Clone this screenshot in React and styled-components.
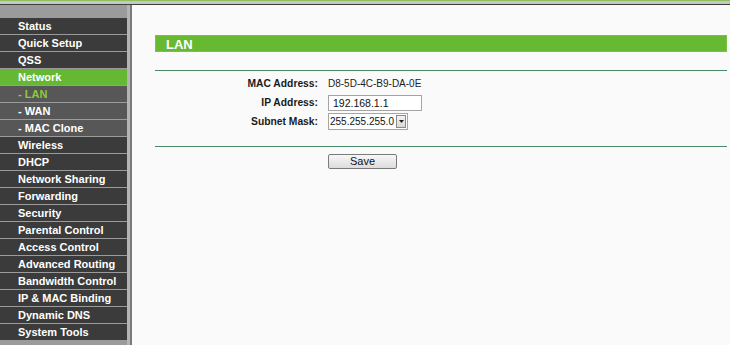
import styled, { createGlobalStyle } from "styled-components";

const GlobalStyle = createGlobalStyle`
  html, body {
    margin: 0;
    padding: 0;
    background: #fafafa;
  }
  body {
    font-family: "Liberation Sans", Arial, sans-serif;
    font-size: 11px;
  }
`;

const Page = styled.div`
  display: flex;
  flex-direction: column;
  width: 730px;
  height: 345px;
  overflow: hidden;
`;

const TopStrip = styled.div`
  height: 5px;
  flex-shrink: 0;
  background: linear-gradient(
    to bottom,
    #8cc15e 0px,
    #8cc15e 1px,
    #c6c6c6 1px,
    #c6c6c6 4px,
    #3e3e3e 4px,
    #3e3e3e 5px
  );
`;

const Body = styled.div`
  display: flex;
  flex: 1;
`;

const Sidebar = styled.nav`
  width: 127px;
  padding: 13px 3px 0 0;
  background: #9b9b9b;
  border-right: 2px solid #7a7a7a;
  display: flex;
  flex-direction: column;
  gap: 1px;
  box-shadow: inset -3px 0 0 #b4b4b4;
`;

const MenuItem = styled.div`
  height: 16px;
  line-height: 16px;
  padding-left: 18px;
  color: ${(p) => (p.$current ? "#8fc93a" : "#ffffff")};
  font-weight: bold;
  font-size: 11px;
  background: ${(p) =>
    p.$active ? "#66b734" : p.$sub ? "#575757" : "#3b3b3b"};
  white-space: nowrap;
`;

const Content = styled.main`
  flex: 1;
  background: #fafafa;
  padding: 30px 3px 0 23px;
`;

const Header = styled.div`
  height: 17px;
  line-height: 17px;
  background: #68b932;
  border: 1px solid #79c244;
  box-sizing: border-box;
  color: #ffffff;
  font-weight: bold;
  font-size: 13px;
  padding-left: 10px;
`;

const Rule = styled.div`
  height: 1px;
  background: #4a8a6a;
  margin-top: ${(p) => p.$top}px;
`;

const Form = styled.div`
  display: grid;
  grid-template-columns: 163px max-content;
  column-gap: 10px;
  row-gap: 2px;
  align-items: center;
  justify-items: start;
  padding-top: 4px;
  justify-content: start;
`;

const Label = styled.div`
  justify-self: end;
  text-align: right;
  font-weight: bold;
  font-size: 10.3px;
  color: #1a1a1a;
  height: 17px;
  line-height: 17px;
`;

const Value = styled.div`
  color: #222;
  font-size: 10px;
  height: 17px;
  line-height: 17px;
`;

const TextInput = styled.div`
  width: 88px;
  height: 14px;
  line-height: 14px;
  border: 1px solid #a5a5a5;
  background: #ffffff;
  color: #111;
  font-size: 10.5px;
  padding-left: 4px;
`;

const Select = styled.div`
  display: flex;
  align-items: center;
  width: 78px;
  height: 15px;
  border: 1px solid #a5a5a5;
  background: #ffffff;
  font-size: 10px;
  color: #111;
`;

const SelectText = styled.span`
  flex: 1;
  padding-left: 1px;
  line-height: 15px;
  white-space: nowrap;
`;

const SelectButton = styled.span`
  width: 8px;
  height: 11px;
  margin-right: 1px;
  flex-shrink: 0;
  border: 1px solid #8a8a8a;
  background: linear-gradient(#f4f4f4, #d8d8d8);
  display: flex;
  align-items: center;
  justify-content: center;
`;

const Actions = styled.div`
  padding: 7px 0 0 173px;
`;

const Button = styled.div`
  width: 67px;
  height: 13px;
  line-height: 13px;
  text-align: center;
  border: 1px solid #7a7a7a;
  border-radius: 2px;
  background: linear-gradient(#f7f7f7, #dcdcdc);
  color: #111;
  font-size: 11px;
`;

const menu = [
  { label: "Status" },
  { label: "Quick Setup" },
  { label: "QSS" },
  { label: "Network", active: true },
  { label: "- LAN", sub: true, current: true },
  { label: "- WAN", sub: true },
  { label: "- MAC Clone", sub: true },
  { label: "Wireless" },
  { label: "DHCP" },
  { label: "Network Sharing" },
  { label: "Forwarding" },
  { label: "Security" },
  { label: "Parental Control" },
  { label: "Access Control" },
  { label: "Advanced Routing" },
  { label: "Bandwidth Control" },
  { label: "IP & MAC Binding" },
  { label: "Dynamic DNS" },
  { label: "System Tools" },
];

export default function App() {
  return (
    <Page>
      <GlobalStyle />
      <TopStrip />
      <Body>
        <Sidebar>
          {menu.map((m) => (
            <MenuItem
              key={m.label}
              $active={m.active}
              $sub={m.sub}
              $current={m.current}
            >
              {m.label}
            </MenuItem>
          ))}
        </Sidebar>
        <Content>
          <Header>LAN</Header>
          <Rule $top={18} />
          <Form>
            <Label>MAC Address:</Label>
            <Value>D8-5D-4C-B9-DA-0E</Value>
            <Label>IP Address:</Label>
            <TextInput>192.168.1.1</TextInput>
            <Label>Subnet Mask:</Label>
            <Select>
              <SelectText>255.255.255.0</SelectText>
              <SelectButton>
                <svg width="5" height="3" viewBox="0 0 5 3">
                  <path d="M0 0 L5 0 L2.5 3 Z" fill="#222" />
                </svg>
              </SelectButton>
            </Select>
          </Form>
          <Rule $top={16} />
          <Actions>
            <Button>Save</Button>
          </Actions>
        </Content>
      </Body>
    </Page>
  );
}
